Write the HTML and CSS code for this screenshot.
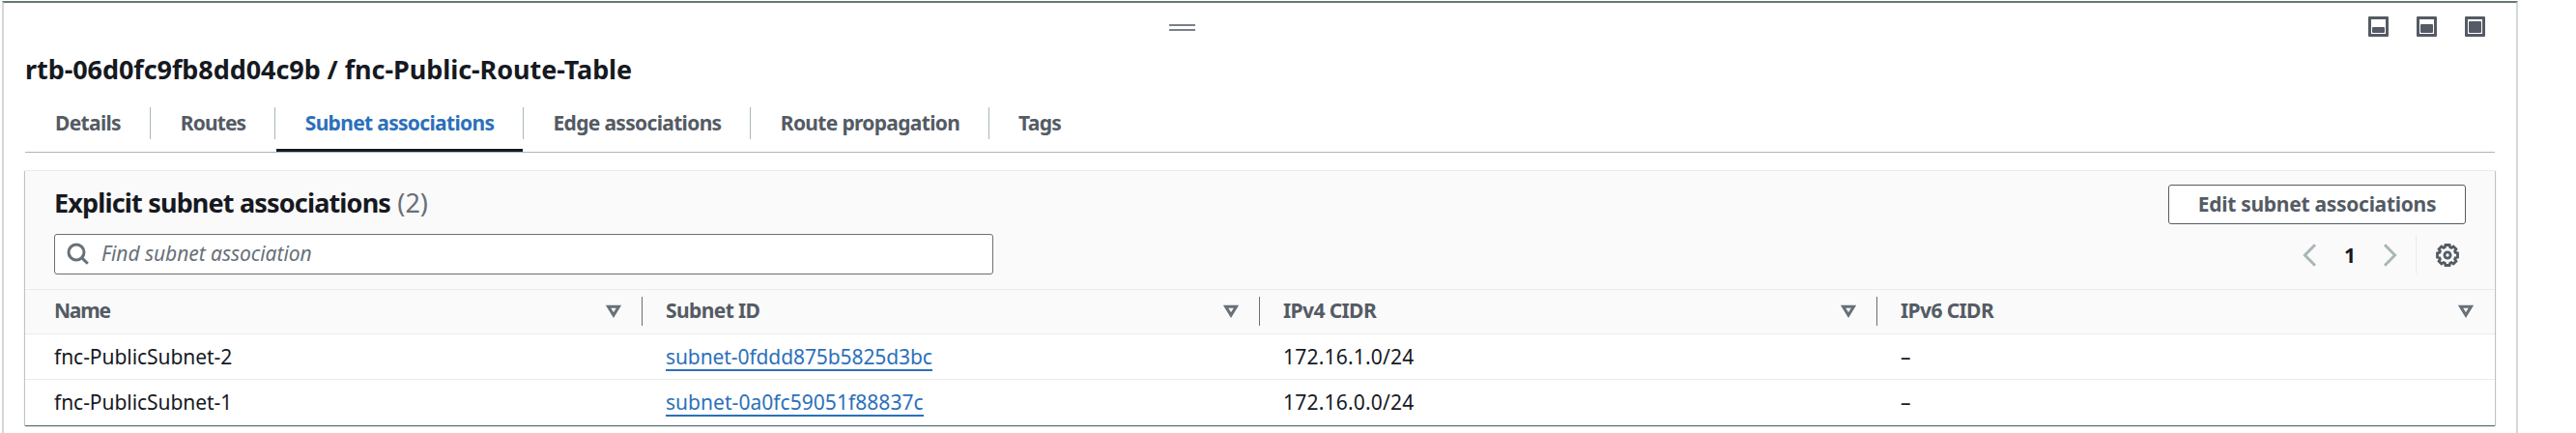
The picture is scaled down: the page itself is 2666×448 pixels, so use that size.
FILE: index.html
```html
<!DOCTYPE html>
<html lang="en">
<head>
<meta charset="utf-8">
<title>Route table - Subnet associations</title>
<link rel="stylesheet" href="styles.css">
</head>
<body>
<svg class="defs" width="0" height="0">
  <symbol id="sort" viewBox="0 0 16 14"><path d="M2.5 2.2h11L8 11z" fill="none" stroke="currentColor" stroke-width="3.1"/></symbol>
</svg>
<main class="panel">
  <header class="panel-bar">
    <span class="handle"><i></i><i></i></span>
    <div class="sizes">
      <button class="size" aria-label="Small"><i class="fill fill-s"></i></button>
      <button class="size" aria-label="Medium"><i class="fill fill-m"></i></button>
      <button class="size" aria-label="Large"><i class="fill fill-l"></i></button>
    </div>
  </header>
  <h1 class="title">rtb-06d0fc9fb8dd04c9b / fnc-Public-Route-Table</h1>
  <nav class="tabs">
    <a class="tab"><span class="label">Details</span></a>
    <a class="tab"><span class="label label-tight">Routes</span></a>
    <a class="tab active"><span class="label">Subnet associations</span></a>
    <a class="tab"><span class="label">Edge associations</span></a>
    <a class="tab"><span class="label">Route propagation</span></a>
    <a class="tab last"><span class="label">Tags</span></a>
  </nav>
  <section class="card">
    <div class="card-head">
      <div class="head-left">
        <h2 class="heading">Explicit subnet associations <span class="count">(2)</span></h2>
        <div class="search">
          <svg width="24" height="24" viewBox="0 0 24 24" fill="none" stroke="currentColor" stroke-width="3"><circle cx="10" cy="10" r="8"/><path d="M15.6 15.6l6.2 6.2"/></svg>
          <span class="placeholder">Find subnet association</span>
        </div>
      </div>
      <div class="head-right">
        <button class="edit">Edit subnet associations</button>
        <div class="pager">
          <svg class="chevron" width="15" height="24" viewBox="0 0 15 24"><path d="M13 1.2L2.4 12 13 22.8"/></svg>
          <span class="page">1</span>
          <svg class="chevron" width="15" height="24" viewBox="0 0 15 24"><path d="M2 1.2L12.6 12 2 22.8"/></svg>
          <span class="rule"></span>
          <svg class="gear" width="24" height="24" viewBox="0 0 24 24"><path d="M9.9 1.5h4.2l.6 2.3 1.4.6 2.1-1.3 2.7 2.7-1.3 2.1.6 1.4 2.3.6v4.2l-2.3.6-.6 1.4 1.3 2.1-2.7 2.7-2.1-1.3-1.4.6-.6 2.3H9.9l-.6-2.3-1.4-.6-2.1 1.3-2.7-2.7 1.3-2.1-.6-1.4-2.3-.6V9.9l2.3-.6.6-1.4-1.3-2.1 2.7-2.7 2.1 1.3 1.4-.6z"/><circle cx="12" cy="12" r="3.1"/></svg>
        </div>
      </div>
    </div>
    <div class="row row-head">
      <div class="th"><span class="th-text th-tight">Name</span><svg width="16" height="14"><use href="#sort"/></svg></div>
      <div class="th"><span class="th-text">Subnet ID</span><svg width="16" height="14"><use href="#sort"/></svg></div>
      <div class="th"><span class="th-text">IPv4 CIDR</span><svg width="16" height="14"><use href="#sort"/></svg></div>
      <div class="th"><span class="th-text">IPv6 CIDR</span><svg width="16" height="14"><use href="#sort"/></svg></div>
    </div>
    <div class="row">
      <div class="td">fnc-PublicSubnet-2</div>
      <div class="td"><a class="link">subnet-0fddd875b5825d3bc</a></div>
      <div class="td cidr">172.16.1.0/24</div>
      <div class="td">–</div>
    </div>
    <div class="row">
      <div class="td">fnc-PublicSubnet-1</div>
      <div class="td"><a class="link link-wide">subnet-0a0fc59051f88837c</a></div>
      <div class="td cidr">172.16.0.0/24</div>
      <div class="td">–</div>
    </div>
  </section>
</main>
</body>
</html>
```
FILE: styles.css
```css
* { box-sizing: border-box; }

body {
  margin: 0;
  height: 448px;
  overflow: hidden;
  padding: 1px 60px 0 2px;
  background: #fff;
  color: #16191f;
  font: 21px/30px "Noto Sans", "Open Sans", sans-serif;
}

.defs { display: block; position: absolute; }
svg { display: block; flex: none; }
button { font: inherit; padding: 0; }

.panel {
  height: 460px;
  padding: 0 22px;
  border: 2px solid #d2d8d8;
  border-top-color: #687778;
  border-bottom: 0;
}

.panel-bar {
  display: flex;
  justify-content: space-between;
  height: 51px;
  padding: 14px 10px 0 1184px;
}
.handle {
  display: flex;
  flex-direction: column;
  gap: 3px;
  width: 27px;
  padding-top: 8px;
}
.handle i { height: 2px; background: #7b808b; }
.sizes { display: flex; gap: 29px; }
.size {
  display: flex;
  align-items: flex-end;
  justify-content: center;
  width: 21px;
  height: 21px;
  padding-bottom: 1px;
  border: 3px solid #545b64;
  border-radius: 1px;
  background: #fff;
}
.fill { width: 13px; background: #545b64; border-radius: 1px; }
.fill-s { height: 6px; }
.fill-m { height: 9px; }
.fill-l { height: 12px; }

.title {
  margin: 0;
  height: 43px;
  font-size: 27px;
  line-height: 35px;
  font-weight: 700;
  letter-spacing: -0.07px;
}

.tabs {
  display: grid;
  grid-template-columns: 130px 129px 257px 235px 247px 1fr;
  height: 61px;
  border-bottom: 1px solid #aab7b8;
}
.tab {
  position: relative;
  display: flex;
  justify-content: center;
  height: 33px;
  margin-top: 14px;
  padding-left: 1px;
  border-right: 1px solid #aab7b8;
  color: #545b64;
  font-weight: 700;
  line-height: 32px;
  letter-spacing: -0.68px;
}
.label-tight { letter-spacing: -0.9px; }
.last { justify-content: flex-start; padding-left: 30px; border-right: 0; }
.active { color: #2c70ba; }
.active::after {
  content: "";
  position: absolute;
  left: 1px;
  right: 0;
  bottom: -13px;
  height: 3px;
  background: #16191f;
}

.card {
  margin-top: 18px;
  height: 264px;
  border-top: 1px solid #eaeded;
  box-shadow: 0 1px 1px 0 rgba(0, 28, 36, .45), 1px 1px 1px 0 rgba(0, 28, 36, .2), -1px 1px 1px 0 rgba(0, 28, 36, .2);
}

.card-head {
  display: flex;
  justify-content: space-between;
  height: 122px;
  padding: 14px 30px 0 30px;
  background: #fafafa;
}
.heading {
  margin: 0;
  height: 51px;
  font-size: 27px;
  line-height: 37px;
  font-weight: 700;
  letter-spacing: -0.83px;
}
.count { color: #687078; font-weight: 400; letter-spacing: 0; margin-left: 1px; }
.search {
  display: flex;
  align-items: center;
  gap: 12px;
  width: 972px;
  height: 42px;
  padding-left: 12px;
  border: 1px solid #687078;
  border-radius: 3px;
  background: #fff;
  color: #687078;
}
.placeholder { margin-bottom: 2px; font-style: italic; line-height: 38px; letter-spacing: -0.05px; }

.head-right { display: flex; flex-direction: column; align-items: flex-end; }
.edit {
  width: 308px;
  height: 41px;
  padding-bottom: 2px;
  border: 1px solid #545b64;
  border-radius: 3px;
  background: #fff;
  color: #545b64;
  font-weight: 700;
  letter-spacing: -0.29px;
}
.pager { display: flex; align-items: center; height: 41px; margin-top: 11px; padding-right: 7px; }
.chevron { fill: none; stroke: #aab7b8; stroke-width: 3; }
.page { width: 68px; text-align: center; font-weight: 700; }
.rule { width: 1px; height: 41px; margin: 0 20px 0 19px; background: #eaeded; }
.gear { fill: none; stroke: #545b64; stroke-width: 2.8; }

.row {
  display: grid;
  grid-template-columns: 639px 639px 639px 1fr;
  height: 47px;
  border-top: 1px solid #eaeded;
}
.row-head { height: 46px; background: #fafafa; color: #545b64; font-weight: 700; }
.th {
  display: flex;
  align-items: center;
  justify-content: space-between;
  height: 30px;
  margin-top: 7px;
  padding: 0 21px 0 24px;
  border-right: 1px solid #687078;
  letter-spacing: -0.6px;
}
.th-text { margin-bottom: 2px; }
.th svg { color: #687078; }
.th:first-child, .td:first-child { padding-left: 30px; }
.th:last-child { border-right: 0; padding-right: 22px; }
.th-tight { letter-spacing: -1.2px; }
.td { padding: 8px 0 0 24px; letter-spacing: -0.05px; }
.link {
  display: inline-block;
  height: 30px;
  border-bottom: 2px solid #2c70ba;
  color: #2c70ba;
  line-height: 30px;
  letter-spacing: -0.09px;
}
.link-wide { letter-spacing: 0.04px; }
.cidr { letter-spacing: 0.2px; }
```
